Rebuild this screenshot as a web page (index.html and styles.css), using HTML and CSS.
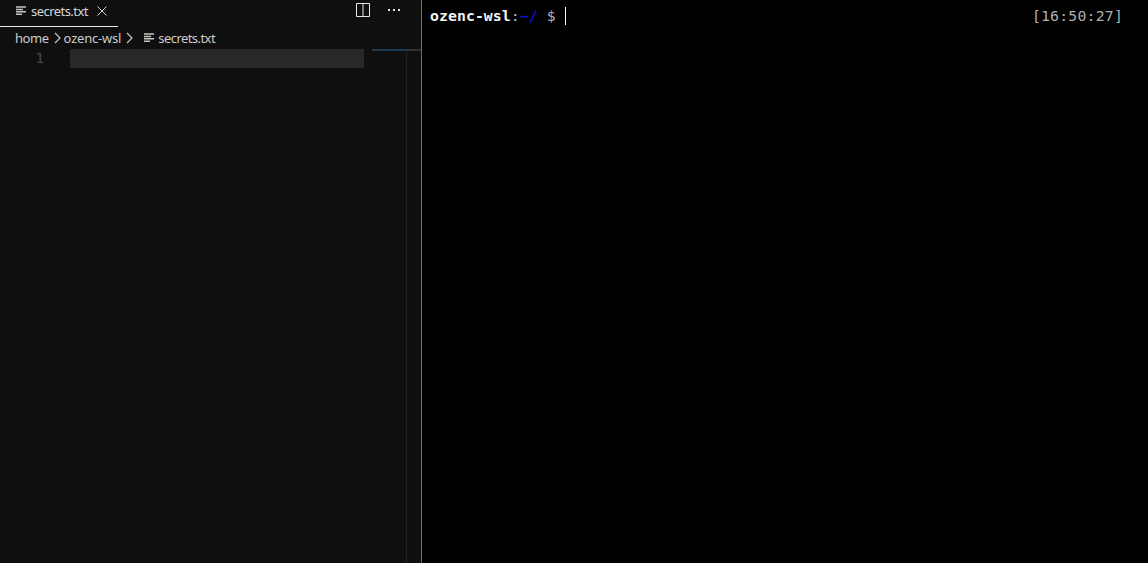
FILE: index.html
```html
<!DOCTYPE html>
<html lang="en">
<head>
<meta charset="utf-8">
<title>secrets.txt</title>
<link rel="stylesheet" href="styles.css">
</head>
<body>
<div class="app">
  <section class="editor">
    <div class="tabs">
      <div class="tab">
        <svg class="file-icon" viewBox="0 0 11 10" width="11" height="10"><path d="M0 1h10M0 3.400h7M0 5.800h10M0 8.200h6"/></svg>
        <span class="tab-name">secrets.txt</span>
        <svg class="close" viewBox="0 0 10 10" width="10" height="10"><path d="M.5.5l9 9M9.500 .5l-9 9"/></svg>
      </div>
      <div class="actions">
        <svg class="split" viewBox="0 0 14 14" width="14" height="14"><path d="M.5.5h13v13H.5zM7 .5v13"/></svg>
        <div class="more"><i></i><i></i><i></i></div>
      </div>
    </div>
    <div class="crumbs">
      <span class="crumb-home">home</span>
      <svg class="chev" viewBox="0 0 7 12" width="7" height="12"><path d="M1 1l5 5-5 5"/></svg>
      <span class="crumb-dir">ozenc-wsl</span>
      <svg class="chev" viewBox="0 0 7 12" width="7" height="12"><path d="M1 1l5 5-5 5"/></svg>
      <svg class="file-icon crumb-icon" viewBox="0 0 11 10" width="11" height="10"><path d="M0 1h10M0 3.400h7M0 5.800h10M0 8.200h6"/></svg>
      <span class="crumb-file">secrets.txt</span>
    </div>
    <div class="body">
      <div class="gutter">1</div>
      <div class="lines"><div class="current"></div></div>
      <div class="minimap"></div>
      <div class="scroll"></div>
    </div>
  </section>
  <main class="terminal">
    <div class="prompt"><b class="host">ozenc-wsl</b><span class="colon">:</span><b class="path">~/</b><span class="dollar"> $ </span><span class="cursor"></span></div>
    <div class="clock">[16:50:27]</div>
  </main>
</div>
</body>
</html>
```
FILE: styles.css
```css
* { box-sizing: border-box; }
html, body { margin: 0; height: 100%; background: #000; overflow: hidden; }
.app { display: flex; height: 563px; width: 1148px; }
.editor { width: 421px; flex: none; background: #0f0f0f; display: flex; flex-direction: column; font-family: "Noto Sans", sans-serif; color: #c8c8c8; }
.tabs { height: 27px; display: flex; justify-content: space-between; flex: none; }
.tab { width: 118px; height: 27px; border-bottom: 1px solid #e8e8e8; display: flex; align-items: center; padding: 0 0 4px 16px; font-size: 13px; letter-spacing: -.55px; color: #d4d4d4; }
.tab-name { margin-left: 4px; }
.file-icon { flex: none; }
.file-icon path { stroke: #c5c5c5; stroke-width: 1.5; fill: none; }
.close { margin: 0 0 1px 9px; flex: none; }
.close path { stroke: #d4d4d4; stroke-width: 1; fill: none; }
.actions { display: flex; align-items: flex-start; padding: 3px 21px 0 0; gap: 18px; }
.split path { stroke: #e8e8e8; stroke-width: 1; fill: none; }
.more { display: flex; gap: 3px; margin-top: 6px; }
.more i { width: 2px; height: 2px; background: #e0e0e0; display: block; }
.crumbs { height: 22px; flex: none; display: flex; align-items: center; padding: 0 0 0 15px; font-size: 13px; color: #cccccc; }
.crumb-home { letter-spacing: -.45px; }
.crumb-dir { letter-spacing: -.2px; }
.crumb-file { letter-spacing: -.55px; }
.chev { margin: 0 3px 0 5px; flex: none; }
.chev path { stroke: #c8c8c8; stroke-width: 1.2; fill: none; }
.crumb-icon { margin: 0 3px 0 8px; }
.body { flex: 1; display: flex; min-height: 0; position: relative; }
.gutter { width: 70px; flex: none; padding: 0 26px 0 0; text-align: right; font: 14px/19px "DejaVu Sans Mono", monospace; color: #4a4a4a; }
.lines { width: 294px; flex: none; }
.current { height: 19px; background: #282828; }
.minimap { width: 43px; flex: none; border-right: 1px solid #222; }
.scroll { flex: 1; }
.body::before { content: ""; position: absolute; left: 372px; top: 0; width: 35px; height: 2px; background: #1c3a50; }
.body::after { content: ""; position: absolute; left: 407px; top: 0; width: 14px; height: 2px; background: #333; }
.terminal { flex: 1; border-left: 1px solid #6e6e6e; background: #000; display: flex; justify-content: space-between; padding: 7px 25px 0 8px; font: 14.8px/18px "DejaVu Sans Mono", monospace; color: #b4b4b4; }
.prompt { display: flex; white-space: pre; letter-spacing: .07px; }
.host { color: #f2f2f2; font-weight: 700; }
.colon { color: #b4b4b4; }
.path { color: #1010d8; font-weight: 700; }
.dollar { color: #b4b4b4; }
.cursor { width: 1px; height: 18px; background: #f2f2f2; }
.clock { color: #b0b0b0; letter-spacing: .2px; }
```
